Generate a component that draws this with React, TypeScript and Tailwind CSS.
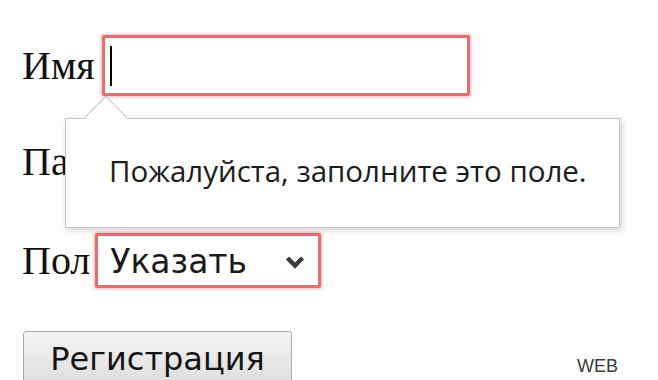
import React from 'react';

const serif = "font-['Liberation_Serif','Times_New_Roman',serif]";
const sans = "font-['DejaVu_Sans','Verdana',sans-serif]";

const Field: React.FC<{ width: string; caret?: boolean }> = ({ width, caret }) => (
  <div
    className={`${width} ml-[7px] flex h-[61px] items-center rounded-[2px] border-[3px] border-[#e46f71] bg-white pl-[5px] shadow-[0_0_3px_1px_rgba(232,120,122,0.55)]`}
  >
    {caret && <span className="block h-[40px] w-[2px] bg-black" />}
  </div>
);

export default function App() {
  return (
    <div className="relative h-[380px] w-[658px] overflow-hidden bg-white text-[#111]">
      <div className="flex flex-col pl-[22px] pt-[35px]">
        <div className="flex items-center">
          <span className={`${serif} text-[40px] leading-[46px]`}>Имя</span>
          <Field width="w-[368px]" caret />
        </div>

        <div className="mt-[35px] flex items-center">
          <span className={`${serif} text-[40px] leading-[46px]`}>Пароль</span>
          <Field width="w-[300px]" />
        </div>

        <div className="mt-[41px] flex items-center">
          <span className={`${serif} text-[40px] leading-[46px]`}>Пол</span>
          <div className="ml-[5px] flex h-[55px] w-[226px] items-center justify-between rounded-[2px] border-[3px] border-[#e46f71] bg-white pl-[12px] pr-[13px] shadow-[0_0_3px_1px_rgba(232,120,122,0.55)]">
            <span className={`${sans} mt-[2px] text-[33px] leading-none text-[#1a1a1a]`}>Указать</span>
            <svg width="20" height="14" viewBox="0 0 20 14" className="mt-[2px]">
              <path d="M2.5 3 L10 10.5 L17.5 3" fill="none" stroke="#3c3c3c" strokeWidth="4.5" />
            </svg>
          </div>
        </div>

        <div className="ml-[1px] mt-[43px] flex h-[56px] w-[269px] items-center justify-center rounded-[3px] border border-[#acacac] bg-gradient-to-b from-[#f4f4f4] to-[#dddddd]">
          <span className={`${sans} text-[32px] leading-none text-[#151515]`}>Регистрация</span>
        </div>
      </div>

      {/* validation tooltip */}
      <div className="absolute left-[65px] top-[118px] flex h-[110px] w-[555px] items-center border border-[#c6c6c6] bg-white pl-[43px] shadow-[2px_2px_6px_rgba(0,0,0,0.18)]">
        <span className="absolute left-[25px] top-[-17px] h-[30px] w-[30px] rotate-45 border-l border-t border-[#c6c6c6] bg-white" />
        <span className="relative -mt-[4px] font-['Open_Sans',sans-serif] text-[29.5px] leading-none text-[#1c1c1c]">
          Пожалуйста, заполните это поле.
        </span>
      </div>

      <span className="absolute left-[577px] top-[357px] font-['Liberation_Sans',Arial,sans-serif] text-[18px] leading-none text-[#3a3a3a]">
        WEB
      </span>
    </div>
  );
}
